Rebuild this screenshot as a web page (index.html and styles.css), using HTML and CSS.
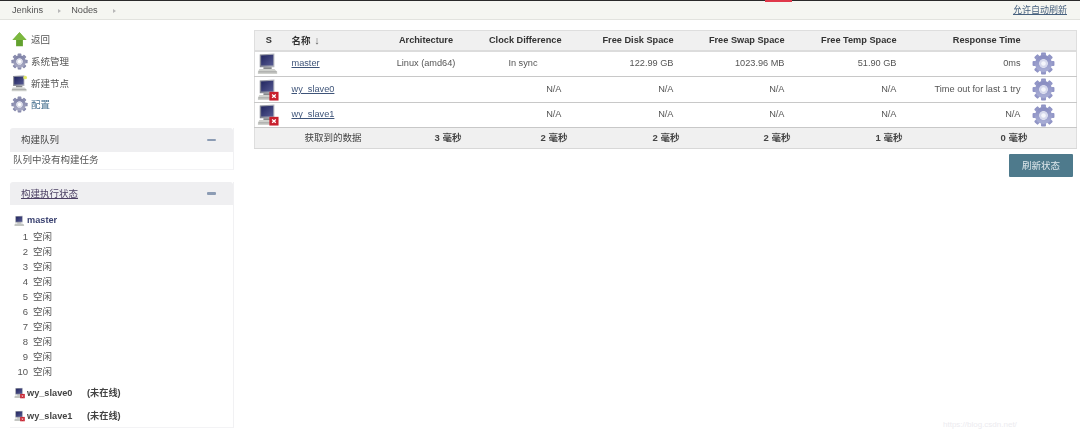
FILE: index.html
```html
<!DOCTYPE html>
<html lang="zh">
<head>
<meta charset="utf-8">
<title>Nodes [Jenkins]</title>
<link rel="stylesheet" href="styles.css">
</head>
<body>
<svg class="defs" width="0" height="0" aria-hidden="true">
  <defs>
    <linearGradient id="gearFill" x1="0" y1="0" x2="0" y2="1">
      <stop offset="0" stop-color="#8b8fc2"/>
      <stop offset="1" stop-color="#a6abd4"/>
    </linearGradient>
    <linearGradient id="sideGear" x1="0" y1="0" x2="0" y2="1">
      <stop offset="0" stop-color="#8184a8"/>
      <stop offset="1" stop-color="#a5a7c2"/>
    </linearGradient>
    <linearGradient id="screenFill" x1="0" y1="0" x2="1" y2="1">
      <stop offset="0" stop-color="#20245e"/>
      <stop offset="1" stop-color="#565a92"/>
    </linearGradient>
    <linearGradient id="bezelFill" x1="0" y1="0" x2="1" y2="0">
      <stop offset="0" stop-color="#7f8290"/>
      <stop offset="1" stop-color="#b9bbc2"/>
    </linearGradient>
    <symbol id="gearTeeth" viewBox="0 0 24 24">
      <rect x="9.4" y="0.6" width="5.2" height="6" rx="1"/>
      <rect x="9.4" y="0.6" width="5.2" height="6" rx="1" transform="rotate(45 12 12)"/>
      <rect x="9.4" y="0.6" width="5.2" height="6" rx="1" transform="rotate(90 12 12)"/>
      <rect x="9.4" y="0.6" width="5.2" height="6" rx="1" transform="rotate(135 12 12)"/>
      <rect x="9.4" y="0.6" width="5.2" height="6" rx="1" transform="rotate(180 12 12)"/>
      <rect x="9.4" y="0.6" width="5.2" height="6" rx="1" transform="rotate(225 12 12)"/>
      <rect x="9.4" y="0.6" width="5.2" height="6" rx="1" transform="rotate(270 12 12)"/>
      <rect x="9.4" y="0.6" width="5.2" height="6" rx="1" transform="rotate(315 12 12)"/>
    </symbol>
    <symbol id="gear" viewBox="0 0 24 24">
      <use href="#gearTeeth" width="24" height="24" fill="url(#gearFill)"/>
      <circle cx="12" cy="12" r="6.6" fill="none" stroke="url(#gearFill)" stroke-width="4.4"/>
      <circle cx="12" cy="12" r="4.2" fill="#d5d8ec"/>
      <circle cx="12" cy="12" r="2.4" fill="#f4f5fb"/>
    </symbol>
    <symbol id="gearSide" viewBox="0 0 24 24">
      <use href="#gearTeeth" width="24" height="24" fill="url(#sideGear)"/>
      <circle cx="12" cy="12" r="6.6" fill="none" stroke="url(#sideGear)" stroke-width="4.4"/>
      <circle cx="12" cy="12" r="4.2" fill="#dcddea"/>
      <circle cx="12" cy="12" r="2.4" fill="#fff"/>
    </symbol>
    <symbol id="computer" viewBox="0 0 24 24">
      <path d="M3 1.5L19 .5V15.5H3z" fill="url(#bezelFill)"/>
      <path d="M4.5 2.8L17.8 2V13.5H4.5z" fill="url(#screenFill)"/>
      <rect x="7" y="15.5" width="9" height="2" fill="#86888c"/>
      <path d="M2.5 17.5H19L22 20.5V23H1V20.5z" fill="#cfd1cd"/>
      <path d="M1.5 20.6H21.5" stroke="#8e9090" stroke-width=".8"/>
    </symbol>
    <symbol id="offline" viewBox="0 0 24 24">
      <use href="#computer" width="24" height="24"/>
      <rect x="13.5" y="14" width="10" height="9.5" fill="#c8202e"/>
      <path d="M16.5 17l4 3.5M20.5 17l-4 3.5" stroke="#fff" stroke-width="1.4"/>
    </symbol>
    <symbol id="newNode" viewBox="0 0 24 24">
      <use href="#computer" width="24" height="24"/>
      <circle cx="20" cy="3.5" r="2.6" fill="#e2e86a"/>
    </symbol>
  </defs>
</svg>

<header class="topbar">
  <nav class="crumbs">
    <a class="crumb">Jenkins</a><span class="sep"></span>
    <a class="crumb">Nodes</a><span class="sep"></span>
  </nav>
  <a class="autorefresh">允许自动刷新</a>
  <span class="redmark"></span>
</header>

<div class="page">
  <aside class="side">
    <ul class="tasks">
      <li class="task">
        <svg class="task-icon" viewBox="0 0 16 16"><path d="M8 1.2L14.6 8.4H11.2V14.4H4.8V8.4H1.4z" fill="#62a12e"/><path d="M8 1.2L14.6 8.4H1.4z" fill="#7cb83f"/></svg>
        <span>返回</span>
      </li>
      <li class="task"><svg class="task-icon"><use href="#gearSide"/></svg><span>系统管理</span></li>
      <li class="task"><svg class="task-icon"><use href="#newNode"/></svg><span>新建节点</span></li>
      <li class="task"><svg class="task-icon"><use href="#gearSide"/></svg><span class="task-current">配置</span></li>
    </ul>

    <section class="pane pane-queue">
      <div class="pane-head"><span>构建队列</span><span class="collapse"></span></div>
      <div class="pane-note">队列中没有构建任务</div>
    </section>

    <section class="pane pane-exec">
      <div class="pane-head"><a class="pane-link">构建执行状态</a><span class="collapse"></span></div>
      <div class="node-title node-master"><svg class="node-icon"><use href="#computer"/></svg><span>master</span></div>
      <ol class="executors">
        <li><span class="ex-n">1</span><span>空闲</span></li>
        <li><span class="ex-n">2</span><span>空闲</span></li>
        <li><span class="ex-n">3</span><span>空闲</span></li>
        <li><span class="ex-n">4</span><span>空闲</span></li>
        <li><span class="ex-n">5</span><span>空闲</span></li>
        <li><span class="ex-n">6</span><span>空闲</span></li>
        <li><span class="ex-n">7</span><span>空闲</span></li>
        <li><span class="ex-n">8</span><span>空闲</span></li>
        <li><span class="ex-n">9</span><span>空闲</span></li>
        <li><span class="ex-n">10</span><span>空闲</span></li>
      </ol>
      <div class="node-title node-off"><svg class="node-icon"><use href="#offline"/></svg><span class="node-name">wy_slave0</span><span>(未在线)</span></div>
      <div class="node-title node-off"><svg class="node-icon"><use href="#offline"/></svg><span class="node-name">wy_slave1</span><span>(未在线)</span></div>
    </section>
  </aside>

  <main class="main">
    <table class="nodes">
      <colgroup>
        <col class="c-s"><col class="c-name"><col class="c-arch"><col class="c-clock"><col class="c-disk"><col class="c-swap"><col class="c-temp"><col class="c-resp"><col class="c-gear">
      </colgroup>
      <thead>
        <tr>
          <th class="mid">S</th><th class="left">名称 <span class="arrow">↓</span></th><th class="mid">Architecture</th><th>Clock Difference</th><th>Free Disk Space</th><th>Free Swap Space</th><th>Free Temp Space</th><th class="resp">Response Time</th><th></th>
        </tr>
      </thead>
      <tbody>
        <tr>
          <td class="ico"><svg class="row-icon"><use href="#computer"/></svg></td>
          <td class="left"><a class="nlink">master</a></td>
          <td class="arch">Linux (amd64)</td><td class="num sync">In sync</td><td class="num">122.99 GB</td><td class="num">1023.96 MB</td><td class="num">51.90 GB</td><td class="num resp">0ms</td>
          <td class="ico"><svg class="gear-icon"><use href="#gear"/></svg></td>
        </tr>
        <tr>
          <td class="ico"><svg class="row-icon"><use href="#offline"/></svg></td>
          <td class="left"><a class="nlink">wy_slave0</a></td>
          <td></td><td class="num">N/A</td><td class="num">N/A</td><td class="num">N/A</td><td class="num">N/A</td><td class="num resp">Time out for last 1 try</td>
          <td class="ico"><svg class="gear-icon"><use href="#gear"/></svg></td>
        </tr>
        <tr class="row-last">
          <td class="ico"><svg class="row-icon"><use href="#offline"/></svg></td>
          <td class="left"><a class="nlink">wy_slave1</a></td>
          <td></td><td class="num">N/A</td><td class="num">N/A</td><td class="num">N/A</td><td class="num">N/A</td><td class="num resp">N/A</td>
          <td class="ico"><svg class="gear-icon"><use href="#gear"/></svg></td>
        </tr>
      </tbody>
      <tfoot>
        <tr>
          <td></td><td class="foot-label">获取到的数据</td><td class="foot">3 毫秒</td><td class="foot">2 毫秒</td><td class="foot">2 毫秒</td><td class="foot">2 毫秒</td><td class="foot">1 毫秒</td><td class="foot">0 毫秒</td><td></td>
        </tr>
      </tfoot>
    </table>
    <div class="actions"><button class="refresh" type="button">刷新状态</button></div>
  </main>
</div>
<span class="watermark">https://blog.csdn.net/</span>
</body>
</html>
```

FILE: styles.css
```css
* { box-sizing: border-box; }
html, body { margin: 0; padding: 0; height: 100%; }
body {
  position: relative;
  height: 434px;
  overflow: hidden;
  background: #fff;
  color: #3a3a3a;
  font: 9.5px/1.2 "Liberation Sans", "Noto Sans CJK SC", sans-serif;
}
.defs { position: absolute; }

.topbar {
  position: relative;
  display: flex;
  align-items: center;
  justify-content: space-between;
  height: 20px;
  padding: 1px 13px 0 12px;
  background: #f5f6f1;
  border-top: 1px solid #2a2a2a;
  border-bottom: 1px solid #e2e3de;
  filter: blur(.3px);
}
.crumbs { display: flex; align-items: center; color: #555; font-size: 9.2px; }
.crumb { color: #555; }
.sep {
  width: 0; height: 0;
  margin: 0 10px 0 15px;
  border-left: 3px solid #b8b8b8;
  border-top: 2.5px solid transparent;
  border-bottom: 2.5px solid transparent;
}
.autorefresh { color: #47617e; text-decoration: underline; font-size: 9px; }
.redmark {
  position: absolute; left: 765px; top: -1px;
  width: 27px; height: 2px; background: #e0394a;
}

.page { display: flex; align-items: flex-start; filter: blur(.3px); }
.side { width: 224px; margin-left: 10px; flex: none; }

.tasks { list-style: none; margin: 0; padding: 9px 0 0 1px; }
.task { display: flex; align-items: center; gap: 4px; height: 21.7px; color: #555; }
.task-icon { width: 17px; height: 17px; flex: none; margin-left: -.5px; margin-right: -.5px; }
.task-current { color: #46708f; }

.pane { border-right: 1px solid #f1f1f3; border-bottom: 1px solid #f3f3f5; }
.pane-queue { margin-top: 12px; height: 42px; }
.pane-exec { margin-top: 12px; height: 246px; }
.pane-head {
  display: flex;
  justify-content: space-between;
  align-items: center;
  height: 24px;
  padding: 0 17px 0 11px;
  background: #efeff1;
  border-radius: 3px 3px 0 0;
  color: #444;
}
.pane-exec .pane-head { height: 23.5px; }
.pane-link { color: #4b3f63; text-decoration: underline; }
.collapse { width: 9px; height: 2.5px; background: #8c9cb4; border-radius: 1px; }
.pane-note { padding: 2px 0 0 3px; color: #555; }

.node-title { display: flex; align-items: center; font-weight: bold; color: #444; font-size: 9.2px; }
.node-master { margin: 9px 0 0 4px; height: 13px; color: #3c4472; }
.node-icon { width: 11px; height: 12px; margin-right: 2px; flex: none; }
.node-off { margin-left: 4px; height: 13px; }
.node-name { width: 60px; }
.executors { list-style: none; margin: 2px 0 0; padding: 0; color: #555; height: 155px; }
.executors li { display: flex; height: 15px; align-items: center; }
.ex-n { width: 18px; text-align: right; margin-right: 5px; }
.node-off + .node-off { margin-top: 10px; }
.executors + .node-off { margin-top: 2.5px; }

.main { flex: none; width: 822px; margin: 10px 0 0 20px; }
.nodes {
  width: 822px;
  table-layout: fixed;
  border-collapse: collapse;
  border: 1px solid #dedede;
  font-size: 9.2px;
}
.c-s { width: 28px; } .c-name { width: 108px; } .c-arch { width: 71px; } .c-clock { width: 106px; }
.c-disk { width: 112px; } .c-swap { width: 111px; } .c-temp { width: 112px; } .c-resp { width: 125px; } .c-gear { width: 49px; }
.nodes th {
  height: 20px; padding: 0 6px 0 0;
  background: #f0f0f0;
  border-bottom: 2px solid #dcdcdc;
  font-weight: bold; color: #333;
  text-align: right;
}
.nodes th.mid { text-align: center; padding: 0; }
.nodes th.left, .nodes td.left { text-align: left; padding-left: 9px; padding-right: 0; }
.nodes th.left { font-size: 9.5px; }
.nodes th.resp { padding-right: 7px; }
.arrow { font-weight: normal; font-size: 11px; margin-left: 1px; color: #666; }
.nodes tbody tr { height: 26px; }
.nodes tbody tr.row-last { height: 25px; }
.nodes tbody td { padding: 0; border-bottom: 1px solid #c8c8c8; color: #555; }
.nodes td.ico { text-align: center; line-height: 0; }
.row-icon { width: 22px; height: 24px; vertical-align: middle; margin-left: -1px; }
.gear-icon { width: 23px; height: 23px; vertical-align: middle; margin-left: -17px; }
.nlink { color: #3e5479; text-decoration: underline; }
.nodes td.arch { text-align: center; }
.nodes td.num { text-align: right; padding-right: 6px; }
.nodes td.resp { padding-right: 7px; }
.nodes td.sync { padding-right: 30px; }
.nodes tfoot tr { height: 21px; }
.nodes tfoot td { padding: 0; background: #f0f0f0; font-weight: bold; color: #444; border-bottom: 1px solid #d8d8d8; font-size: 9.5px; }
.nodes td.foot-label { padding-left: 22px; font-weight: normal; }
.nodes td.foot { text-align: right; }

.actions { display: flex; justify-content: flex-end; margin: 5px 3px 0 0; }
.refresh {
  width: 64px; height: 23px; padding: 0;
  border: 0; border-radius: 1px;
  background: #4e7a8c; color: #dfe8ec;
  font: inherit;
}

.watermark {
  position: absolute; left: 943px; top: 420px;
  color: #ecebef; font-size: 8px;
}
```
